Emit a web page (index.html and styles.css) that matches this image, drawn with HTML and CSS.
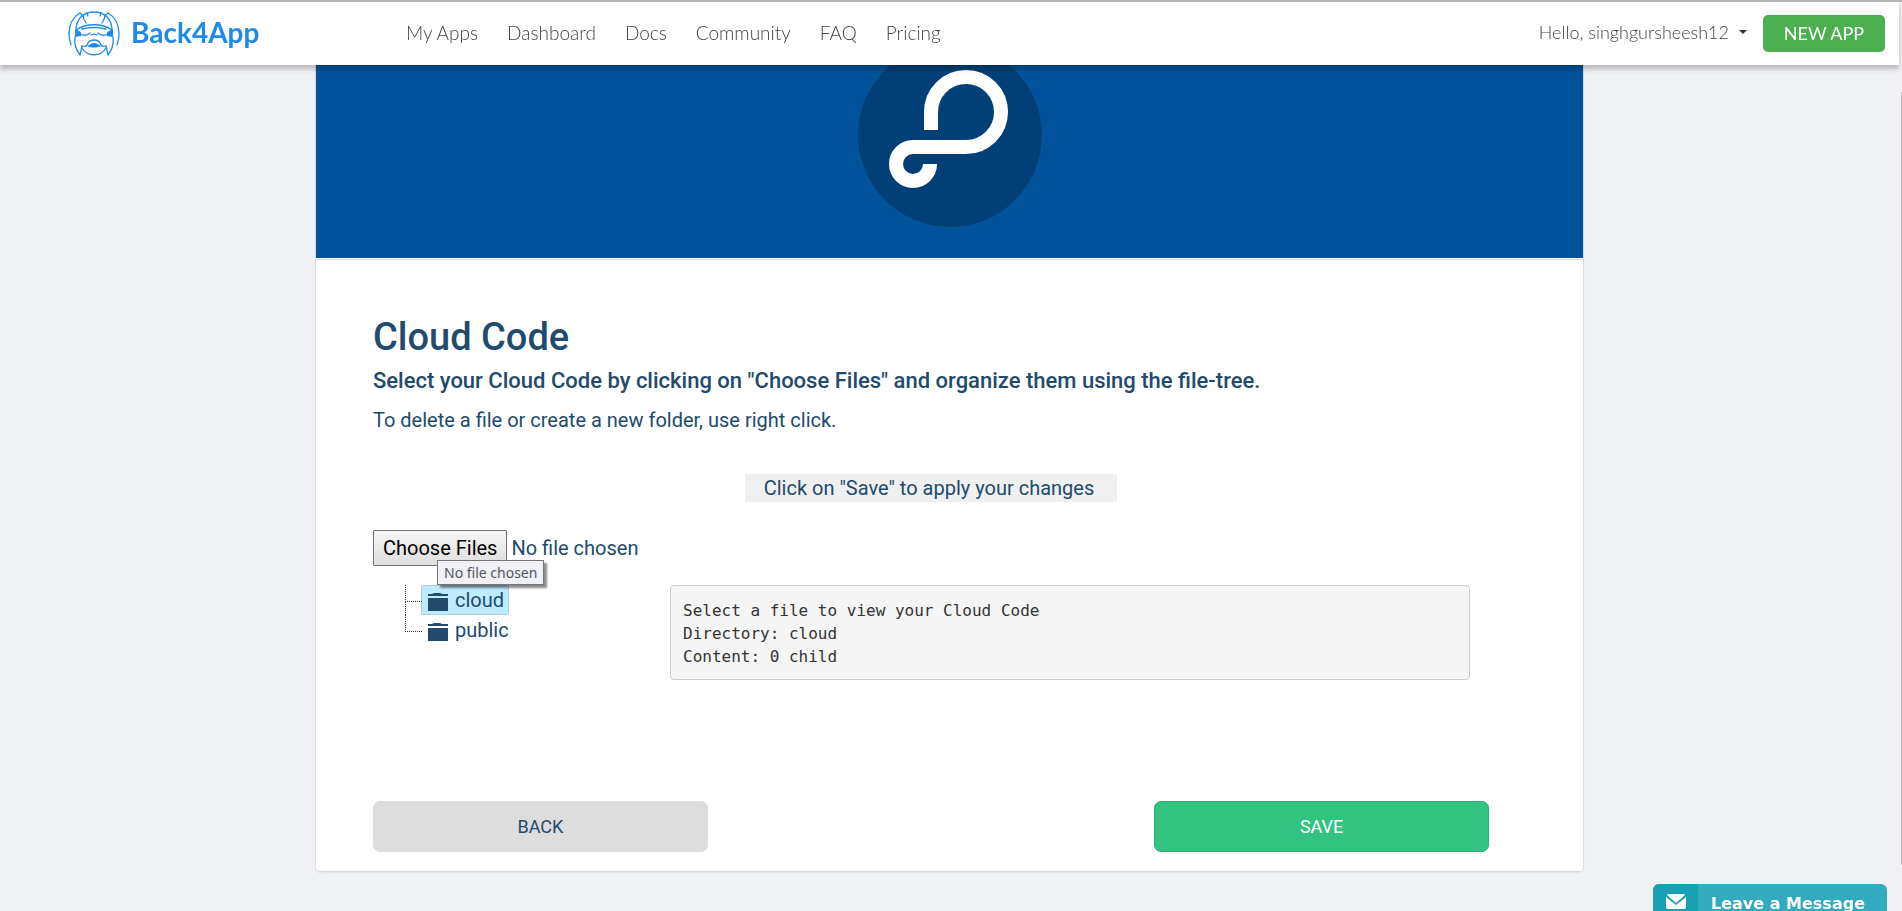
FILE: index.html
```html
<!DOCTYPE html>
<html lang="en">
<head>
<meta charset="utf-8">
<title>Back4App - Cloud Code</title>
<link rel="stylesheet" href="styles.css">
</head>
<body>
<header class="topbar">
  <a class="brand" href="#">
    <svg class="brand-icon" viewBox="0 0 52 46" aria-hidden="true">
      <g fill="none" stroke="currentColor" stroke-width="1.3" stroke-linecap="round" stroke-linejoin="round">
        <path d="M12 2C5 6 1 14 1 23c0 4 1 8 2 11M40 2c7 4 11 12 11 21 0 4-1 8-2 11"/>
        <path d="M12 2l3 3M40 2l-3 3"/>
        <path d="M8 20C8 8 15 1 26 1s18 7 18 19"/>
        <path d="M8 19c10-7 26-7 36 0M14 18c8-2 16-2 24 0"/>
        <path d="M15 4c0 3 1 5 3 8M37 4c0 3-1 5-3 8M19 2l1 3M33 2l-1 3"/>
        <path d="M12 23c4 2 8 1 10-1M40 23c-4 2-8 1-10-1M23 24l3-1 3 1"/>
        <path d="M7 26c-1 7 1 13 5 18l2-9M45 26c1 7-1 13-5 18l-2-9"/>
        <path d="M14 35c3 1 5 0 6-3 1-2 3-3 6-3s5 1 6 3c1 3 3 4 6 3"/>
        <path d="M14 37c5 9 19 9 24 0"/>
      </g>
      <path fill="currentColor" d="M7 18l6 3v4l-6 1zM45 18l-6 3v4l6 1zM19 35c3-1 4-3 7-3s4 2 7 3c-4 2-10 2-14 0z"/>
    </svg>
    <span>Back4App</span>
  </a>
  <nav class="links">
    <a href="#">My Apps</a>
    <a href="#">Dashboard</a>
    <a href="#">Docs</a>
    <a href="#">Community</a>
    <a href="#">FAQ</a>
    <a href="#">Pricing</a>
  </nav>
  <div class="account">
    <button class="user" type="button">Hello, singhgursheesh12 <span class="caret"></span></button>
    <button class="new-app" type="button">NEW APP</button>
  </div>
</header>
<main class="page">
  <section class="card">
    <div class="banner">
      <svg class="parse-logo" viewBox="0 0 184 162" aria-hidden="true">
        <circle cx="92" cy="70" r="92" fill="#004076"/>
        <path d="M73 65V47A35 35 0 1 1 108 82H55A17 17 0 1 0 72 99" fill="none" stroke="#fff" stroke-width="14"/>
      </svg>
    </div>
    <div class="content">
      <h1>Cloud Code</h1>
      <h2>Select your Cloud Code by clicking on "Choose Files" and organize them using the file-tree.</h2>
      <p class="note">To delete a file or create a new folder, use right click.</p>
      <p class="hint">Click on "Save" to apply your changes</p>
      <div class="chooser">
        <input class="files" type="file" multiple aria-label="Choose Files">
        <span class="tooltip" role="tooltip">No file chosen</span>
      </div>
      <div class="workspace">
        <ul class="tree">
          <li><a class="node selected" href="#"><svg class="folder" viewBox="0 0 20 18" aria-hidden="true"><path d="M0 3V1h4l2-1h6l2 1h6v2zM0 5h20v13H0z"/></svg>cloud</a></li>
          <li><a class="node" href="#"><svg class="folder" viewBox="0 0 20 18" aria-hidden="true"><path d="M0 3V1h4l2-1h6l2 1h6v2zM0 5h20v13H0z"/></svg>public</a></li>
        </ul>
        <pre class="viewer">Select a file to view your Cloud Code
Directory: cloud
Content: 0 child</pre>
      </div>
      <div class="actions">
        <button class="back" type="button">BACK</button>
        <button class="save" type="button">SAVE</button>
      </div>
    </div>
  </section>
</main>
<button class="chat" type="button">
  <span class="chat-icon"><svg viewBox="0 0 20 15" aria-hidden="true"><path fill="#fff" d="M2 0h16l1 1-9 8-9-8zM0 3l10 8 10-8v10q0 2-2 2H2q-2 0-2-2z"/></svg></span>
  <span class="chat-label">Leave a Message</span>
</button>
</body>
</html>
```
FILE: styles.css
```css
* { box-sizing: border-box; }
body {
  margin: 0;
  min-height: 100vh;
  padding-right: 3px;
  border-top: 2px solid #b4b4b4;
  background: #eff1f5;
  color: #224a6d;
  font-family: Roboto, sans-serif;
  font-size: 20px;
  overflow: hidden;
}
/* slim scroll track with its thumb */
body::after {
  content: "";
  position: fixed;
  top: 2px;
  right: 0;
  bottom: 0;
  width: 3px;
  background: linear-gradient(#c1c1c1, #c1c1c1) right 88px / 1px 85% no-repeat #f1f1f1;
  background-position: right 66%;
}
a { color: inherit; text-decoration: none; }
button { font: inherit; cursor: pointer; }

.topbar {
  position: relative;
  z-index: 2;
  display: flex;
  align-items: center;
  height: 63px;
  padding: 0 14px 0 68px;
  background: #fff;
  box-shadow: 0 4px 5px rgba(0, 0, 0, .24);
  color: #444;
  font-family: Lato, sans-serif;
  font-weight: 300;
  font-size: 18px;
}
.brand {
  display: flex;
  align-items: center;
  gap: 11px;
  width: 338px;
  color: #208aec;
  font-weight: 700;
  font-size: 28px;
}
.brand span { padding-bottom: 3px; }
.brand-icon { width: 52px; height: 46px; }
.links { display: flex; gap: 29px; padding-bottom: 2px; font-size: 19px; }
.account { display: flex; align-items: center; gap: 16px; margin-left: auto; }
.user {
  display: flex;
  align-items: center;
  gap: 10px;
  padding: 0 0 3px;
  border: 0;
  background: none;
  color: inherit;
}
.caret { border: 4px solid transparent; border-top-color: #333; border-bottom: 0; }
.new-app {
  width: 122px;
  height: 37px;
  padding: 0 0 2px;
  border: 0;
  border-radius: 5px;
  background: #4caf50;
  color: #fff;
  font-weight: 400;
}

.page { padding: 0 315px; }
.card {
  border: 1px solid #d9dbdd;
  border-top: 0;
  border-radius: 0 0 5px 5px;
  background: #fff;
  box-shadow: 0 1px 2px rgba(0, 0, 0, .06);
}
.banner {
  display: flex;
  justify-content: center;
  align-items: flex-start;
  height: 193px;
  background: #00539b;
}
.parse-logo { width: 184px; height: 162px; }
.content {
  margin-top: 1px;
  padding: 52px 94px 19px 57px;
  border-top: 1px solid #d9dbdd;
}
h1, h2, p, ul, pre { margin: 0; padding: 0; }
h1 { font-size: 38px; font-weight: 500; line-height: 50px; }
h2 { margin-top: 3px; font-size: 22px; font-weight: 500; line-height: 32px; }
.note { margin-top: 9px; line-height: 28px; }
.hint {
  width: fit-content;
  margin: 40px auto 28px;
  padding: 0 23px 0 19px;
  background: #f0f0f0;
  line-height: 28px;
}
.chooser { position: relative; height: 36px; }
.files { display: block; width: 300px; font: inherit; color: inherit; }
.files::file-selector-button {
  height: 36px;
  margin-right: 4px;
  padding: 0 9px;
  border: 1px solid #767676;
  border-radius: 1px;
  background: linear-gradient(#f6f6f6, #dedede);
  color: #000;
  font: inherit;
}
.tooltip {
  position: absolute;
  left: 64px;
  top: 30px;
  z-index: 1;
  padding: 0 6px;
  border: 1px solid #767676;
  background: #f0f0f7;
  box-shadow: 3px 3px 2px rgba(0, 0, 0, .45);
  color: #575757;
  font-family: "Noto Sans", sans-serif;
  font-size: 14px;
  line-height: 23px;
  white-space: nowrap;
}
.workspace { display: flex; align-items: flex-start; margin: 19px 19px 0 0; }
.tree { flex: none; width: 265px; margin-right: 32px; padding-left: 32px; list-style: none; }
.tree li { position: relative; height: 30px; padding-left: 16px; }
.tree li::before {
  content: "";
  position: absolute;
  left: 0;
  top: 0;
  width: 16px;
  height: 16px;
  border-left: 1px dotted #333;
  border-bottom: 1px dotted #333;
}
.tree li:first-child::after {
  content: "";
  position: absolute;
  left: 0;
  top: 16px;
  height: 14px;
  border-left: 1px dotted #333;
}
.node {
  display: inline-flex;
  align-items: center;
  gap: 7px;
  height: 30px;
  padding: 0 4px 0 6px;
  border: 1px solid transparent;
  border-radius: 2px;
}
.selected { border-color: #a9cfe2; background: #beebff; }
.folder { width: 20px; height: 18px; margin-top: 4px; fill: #224a6d; }
.viewer {
  flex: 1;
  padding: 13px 12px 11px;
  border: 1px solid #ccc;
  border-radius: 4px;
  background: #f5f5f5;
  color: #333;
  font-family: "DejaVu Sans Mono", monospace;
  font-size: 16px;
  line-height: 23px;
}
.actions { display: flex; justify-content: space-between; margin-top: 121px; }
.actions button {
  width: 30%;
  height: 51px;
  border: 1px solid #ddd;
  border-radius: 7px;
  background: #ddd;
  color: inherit;
  font-size: 18px;
}
.actions .save { border-color: #2eae73; background: #32c381; color: #fff; }

.chat {
  position: fixed;
  right: 15px;
  bottom: -13px;
  z-index: 3;
  display: flex;
  width: 234px;
  height: 40px;
  padding: 0;
  overflow: hidden;
  border: 0;
  border-radius: 6px 6px 0 0;
  background: #31abbd;
  color: #fff;
  font: bold 16px/40px "DejaVu Sans", sans-serif;
}
.chat-icon { display: flex; justify-content: center; align-items: center; width: 45px; height: 36px; padding-bottom: 2px; background: #18a0b3; }
.chat-icon svg { width: 20px; height: 15px; }
.chat-label { padding-left: 13px; }
```
